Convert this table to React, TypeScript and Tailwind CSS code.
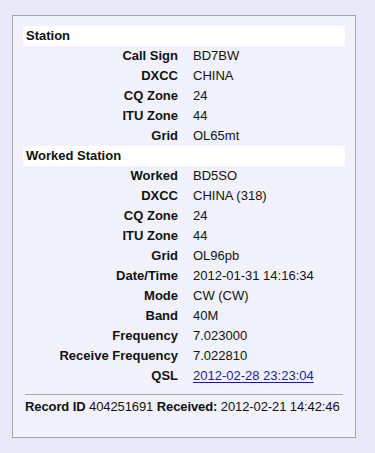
import React from "react";

type Row = { label: string; value: React.ReactNode };

const station: Row[] = [
  { label: "Call Sign", value: "BD7BW" },
  { label: "DXCC", value: "CHINA" },
  { label: "CQ Zone", value: "24" },
  { label: "ITU Zone", value: "44" },
  { label: "Grid", value: "OL65mt" },
];

const worked: Row[] = [
  { label: "Worked", value: "BD5SO" },
  { label: "DXCC", value: "CHINA (318)" },
  { label: "CQ Zone", value: "24" },
  { label: "ITU Zone", value: "44" },
  { label: "Grid", value: "OL96pb" },
  { label: "Date/Time", value: "2012-01-31 14:16:34" },
  { label: "Mode", value: "CW (CW)" },
  { label: "Band", value: "40M" },
  { label: "Frequency", value: "7.023000" },
  { label: "Receive Frequency", value: "7.022810" },
  {
    label: "QSL",
    value: (
      <a href="#" className="text-[#1c1ca8] underline underline-offset-2">
        2012-02-28 23:23:04
      </a>
    ),
  },
];

function Section({ title, rows }: { title: string; rows: Row[] }) {
  return (
    <>
      <div className="h-[20px] bg-white pl-[3px] font-bold leading-[20px]">{title}</div>
      {rows.map((r, i) => (
        <div key={i} className="grid h-[20px] grid-cols-[155px_1fr] gap-x-[15px] leading-[20px]">
          <div className="whitespace-nowrap text-right font-bold">{r.label}</div>
          <div className="whitespace-nowrap">{r.value}</div>
        </div>
      ))}
    </>
  );
}

export default function App() {
  return (
    <div
      className="min-h-[453px] w-[375px] bg-[#e8e8f8] pt-[15px] pl-[12px] text-[13px] text-[#111]"
      style={{ fontFamily: '"Liberation Sans", Arial, sans-serif' }}
    >
      <div className="w-[344px] border border-[#a3a3ad] bg-[#f2f2fc] px-[10px] pt-[10px] pb-[22px]">
        <Section title="Station" rows={station} />
        <Section title="Worked Station" rows={worked} />
        <div className="mx-[2px] mt-[8px] h-px bg-[#a9a9b0]" />
        <div className="mt-[4px] whitespace-nowrap pl-[2px] leading-[16px] tracking-[-0.1px]">
          <span className="font-bold">Record ID</span> 404251691{" "}
          <span className="font-bold">Received:</span> 2012-02-21 14:42:46
        </div>
      </div>
    </div>
  );
}
